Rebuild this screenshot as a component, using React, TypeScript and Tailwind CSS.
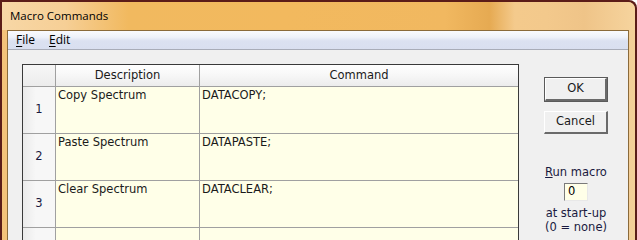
import React from "react";

const rows = [
  { n: 1, desc: "Copy Spectrum", cmd: "DATACOPY;" },
  { n: 2, desc: "Paste Spectrum", cmd: "DATAPASTE;" },
  { n: 3, desc: "Clear Spectrum", cmd: "DATACLEAR;" },
  { n: 4, desc: "", cmd: "" },
];

const tahoma = "font-['DejaVu_Sans',Verdana,sans-serif] text-[11.5px]";

const Button: React.FC<{ label: string; primary?: boolean }> = ({
  label,
  primary,
}) => (
  <div
    className={
      primary
        ? "w-[64px] h-[25px] border border-[#5a5a5a] bg-[#f0f0f0]"
        : "w-[64px] h-[23px] bg-[#f0f0f0]"
    }
  >
    <div className="w-full h-full border-t border-l border-white border-b-2 border-r-2 border-b-[#6a6a6a] border-r-[#6a6a6a] flex items-center justify-center text-[#1a1a1a]">
      <span className={`${tahoma} leading-none`}>{label}</span>
    </div>
  </div>
);

export default function App() {
  return (
    <div className="w-[637px] h-[240px] overflow-hidden bg-white">
      <div className="h-full bg-[#5b1c18] pt-[2px] px-[2px] rounded-tr-[8px]">
        <div className="h-full flex flex-col rounded-tr-[7px] bg-[#efb565] bg-[linear-gradient(90deg,#f3c27a_0%,#f0b662_60%,#ebb060_80%,#f2c688_86%,#f4cf98_100%)]">
          {/* title bar */}
          <div className="h-[28px] shrink-0 relative flex items-center pl-[8px] rounded-tr-[7px] bg-[linear-gradient(90deg,#f7d7a6_0%,#f6cf96_10%,#f1b95f_20%,#f2b95e_45%,#f1b860_70%,#e6aa52_77%,#f4ca8c_81%,#f3c98c_86%,#efc488_92%,#f6d49e_100%)]">
            <span className="font-['Open_Sans',sans-serif] text-[11.5px] text-black leading-none">
              Macro Commands
            </span>
          </div>
          {/* client */}
          <div className="flex-1 ml-[5px] mr-[6px] border-t border-l border-r border-[#8a6a3a] flex flex-col bg-[#f0f0f0]">
            <div className="h-[19px] shrink-0 border-b border-[#a8acb8] bg-[linear-gradient(180deg,#fafbfe_0%,#eef1f9_35%,#dbe1f1_55%,#d9dff0_100%)] flex items-center gap-[14px] pl-[8px] font-['Open_Sans',sans-serif] text-[12px] text-black leading-none">
              <span>
                <span className="underline underline-offset-2">F</span>ile
              </span>
              <span>
                <span className="underline underline-offset-2">E</span>dit
              </span>
            </div>
            <div className="flex-1 flex pl-[14px] pt-[14px]">
              {/* grid */}
              <div className="border border-[#3a3a3a] bg-[#a0a0a0] self-start">
                <div className="grid grid-cols-[32px_143px_318px] gap-px">
                  <div className="h-[21px] bg-[linear-gradient(180deg,#f6f6f6,#ececec)]" />
                  <div
                    className={`h-[21px] bg-[linear-gradient(180deg,#ffffff_0%,#f7f7f7_50%,#ececec_100%)] flex items-center justify-center text-[#1a1a1a] ${tahoma}`}
                  >
                    Description
                  </div>
                  <div
                    className={`h-[21px] bg-[linear-gradient(180deg,#ffffff_0%,#f7f7f7_50%,#ececec_100%)] flex items-center justify-center text-[#1a1a1a] ${tahoma}`}
                  >
                    Command
                  </div>
                  {rows.map((r) => (
                    <React.Fragment key={r.n}>
                      <div
                        className={`h-[46px] bg-[linear-gradient(90deg,#ebebeb_0%,#f7f7f7_40%,#f7f7f7_100%)] flex items-center justify-center text-[#1a1a40] ${tahoma}`}
                      >
                        {r.n < 4 ? r.n : ""}
                      </div>
                      <div
                        className={`h-[46px] bg-[#ffffe8] pl-[2px] pt-[2px] text-[#1a1a1a] leading-[13px] ${tahoma}`}
                      >
                        {r.desc}
                      </div>
                      <div
                        className={`h-[46px] bg-[#ffffe8] pl-[2px] pt-[2px] text-[#1a1a1a] leading-[13px] ${tahoma}`}
                      >
                        {r.cmd}
                      </div>
                    </React.Fragment>
                  ))}
                </div>
              </div>
              {/* right panel */}
              <div className="ml-[25px] pt-[13px] flex flex-col items-center w-[64px]">
                <Button label="OK" primary />
                <div className="mt-[9px]">
                  <Button label="Cancel" />
                </div>
                <div
                  className={`mt-[32px] text-[#1a1a40] leading-[13px] whitespace-nowrap ${tahoma}`}
                >
                  <span className="underline underline-offset-1">R</span>un
                  macro
                </div>
                <div
                  className={`mt-[4px] w-[24px] h-[18px] border-t border-l border-[#7a7a7a] border-b border-r border-b-[#e8e8e8] border-r-[#e8e8e8] bg-[#ffffe8] flex items-center pl-[3px] text-black ${tahoma}`}
                >
                  0
                </div>
                <div
                  className={`mt-[5px] text-[#1a1a40] leading-[14px] text-center whitespace-nowrap ${tahoma}`}
                >
                  <div>at start-up</div>
                  <div>(0 = none)</div>
                </div>
              </div>
            </div>
          </div>
        </div>
      </div>
    </div>
  );
}
